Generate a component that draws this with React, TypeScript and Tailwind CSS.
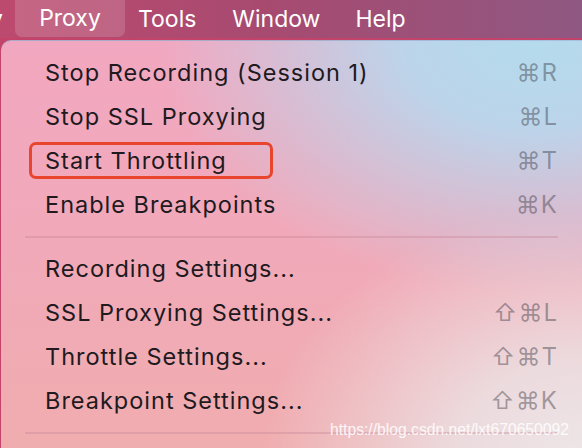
import React from 'react';

type Item = { label: string; keys: string; boxed?: boolean };

const groupA: Item[] = [
  { label: 'Stop Recording (Session 1)', keys: '⌘R' },
  { label: 'Stop SSL Proxying', keys: '⌘L' },
  { label: 'Start Throttling', keys: '⌘T', boxed: true },
  { label: 'Enable Breakpoints', keys: '⌘K' },
];

const groupB: Item[] = [
  { label: 'Recording Settings...', keys: '' },
  { label: 'SSL Proxying Settings...', keys: '⇧⌘L' },
  { label: 'Throttle Settings...', keys: '⇧⌘T' },
  { label: 'Breakpoint Settings...', keys: '⇧⌘K' },
];

function Row({ item }: { item: Item }) {
  return (
    <div className="relative flex h-[44px] items-center justify-between pl-[44px] pr-[24px]">
      <span className="text-[23.5px] tracking-[1px] text-[#201a1e]">{item.label}</span>
      <span className="text-[24px] tracking-[1px] text-[#3c3c46]/45">{item.keys}</span>
      {item.boxed && (
        <div className="absolute left-[28px] top-[3px] h-[37px] w-[244px] rounded-[7px] border-[3px] border-[#e9452d]" />
      )}
    </div>
  );
}

function Separator() {
  return (
    <div className="flex h-[20px] items-center px-[24px]">
      <div className="h-[2px] w-full bg-[#c88a98]/40" />
    </div>
  );
}

export default function App() {
  return (
    <div
      className="relative h-[448px] w-[582px] overflow-hidden bg-[#c3436a]"
      style={{ fontFamily: 'Inter, "Liberation Sans", sans-serif' }}
    >
      <div className="flex h-[38px] items-center bg-[linear-gradient(90deg,#bd4a6f_0%,#a84a70_45%,#8f5882_100%)] text-[23px] text-white">
        <span className="-ml-[10px] w-[13px] overflow-hidden">y</span>
        <div className="ml-[12px] flex h-[37px] w-[110px] items-center justify-center self-start rounded-b-[7px] bg-white/15">
          Proxy
        </div>
        <span className="ml-[13px]">Tools</span>
        <span className="ml-[36px]">Window</span>
        <span className="ml-[35px]">Help</span>
      </div>
      <div className="ml-[1px] mt-[2px] h-[420px] w-[581px] rounded-tl-[10px] border-t border-[#7aa8d8]/60 bg-[radial-gradient(ellipse_65%_60%_at_92%_0%,#b4dbec_0%,#bcd4ea_35%,transparent_100%),radial-gradient(ellipse_55%_60%_at_100%_100%,#ede6e8_0%,#ecdadd_40%,transparent_100%),linear-gradient(180deg,#f2a7c0_0%,#f1a9ba_45%,#f0adae_100%)] pt-[10px]">
        {groupA.map((it) => (
          <Row key={it.label} item={it} />
        ))}
        <Separator />
        {groupB.map((it) => (
          <Row key={it.label} item={it} />
        ))}
        <Separator />
      </div>
      <div
        className="absolute left-[330px] top-[418px] text-[15.7px] text-white/85"
        style={{ fontFamily: '"Liberation Sans", sans-serif' }}
      >
        https://blog.csdn.net/lxt670650092
      </div>
    </div>
  );
}
